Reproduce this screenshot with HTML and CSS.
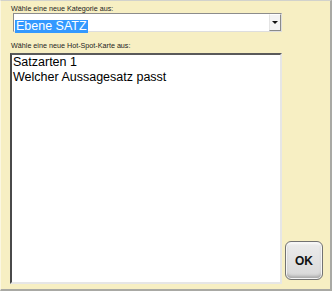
FILE: index.html
```html
<!DOCTYPE html>
<html lang="de">
<head>
    <meta charset="UTF-8">
    <title>Hot-Spot-Karte wählen</title>
    <link rel="stylesheet" href="styles.css">
</head>
<body>
    <div class="panel">
        <div class="label">Wähle eine neue Kategorie aus:</div>
        <div class="combo">
            <div class="combo-value"><span class="selected">Ebene SATZ</span></div>
            <div class="combo-arrow"><span class="arrow"></span></div>
        </div>
        <div class="label label-list">Wähle eine neue Hot-Spot-Karte aus:</div>
        <div class="list-row">
            <div class="listbox">
                <div class="list-item">Satzarten 1</div>
                <div class="list-item">Welcher Aussagesatz passt</div>
            </div>
            <button class="ok-button">OK</button>
        </div>
    </div>
</body>
</html>
```

FILE: styles.css
```css
:root {
    --cream: #f7efc3;
    --frame: #a9a9a4;
}

* {
    margin: 0;
    padding: 0;
    box-sizing: border-box;
}

body {
    font-family: 'Liberation Sans', Arial, sans-serif;
    background: var(--cream);
}

.panel {
    width: 332px;
    height: 291px;
    background: var(--cream);
    border-top: 1px solid #d2d2cc;
    border-left: 1px solid #fbf7e2;
    border-right: 2px solid var(--frame);
    border-bottom: 2px solid var(--frame);
    padding: 3px 0 0 9px;
}

.label {
    font-size: 7.2px;
    line-height: 9px;
    color: #222;
    margin-left: 1px;
}

.label-list {
    margin-top: 9px;
}

.combo {
    display: flex;
    width: 269px;
    height: 19px;
    margin-left: 3px;
    background: white;
    border: 1px solid;
    border-color: #8c8c8c #dedede #dedede #8c8c8c;
}

.combo-value {
    flex: 1;
    padding: 2px 0 0 1px;
}

.selected {
    display: inline-block;
    height: 13px;
    line-height: 13px;
    padding: 0 1px;
    font-size: 12.5px;
    color: white;
    background: #3399ff;
}

.combo-arrow {
    width: 12px;
    display: flex;
    align-items: center;
    justify-content: center;
    background: #f4f4f4;
    border: 1px solid;
    border-color: #ffffff #8a8a8a #8a8a8a #e4e4e4;
}

.arrow {
    width: 0;
    height: 0;
    border-left: 3px solid transparent;
    border-right: 3px solid transparent;
    border-top: 3px solid #111;
}

.list-row {
    display: flex;
    align-items: flex-end;
    gap: 3px;
    margin-top: 3px;
}

.listbox {
    width: 272px;
    height: 231px;
    background: white;
    border: 2px solid;
    border-color: #5a5a5a #e6e6e6 #e6e6e6 #4a4a4a;
    padding-left: 1px;
}

.list-item {
    font-size: 12.5px;
    line-height: 15px;
    color: #000;
    white-space: nowrap;
}

.ok-button {
    width: 38px;
    height: 39px;
    margin-bottom: 4px;
    font-family: 'Liberation Sans', Arial, sans-serif;
    font-weight: bold;
    font-size: 12px;
    color: #111;
    border: 1px solid #727272;
    border-radius: 6px;
    background: linear-gradient(#ececec, #d8d8d8);
    box-shadow: inset 0 0 0 1px #f6f6f6, inset 0 -3px 3px #a9a9a9, inset 0 2px 2px #fafafa;
}
```
